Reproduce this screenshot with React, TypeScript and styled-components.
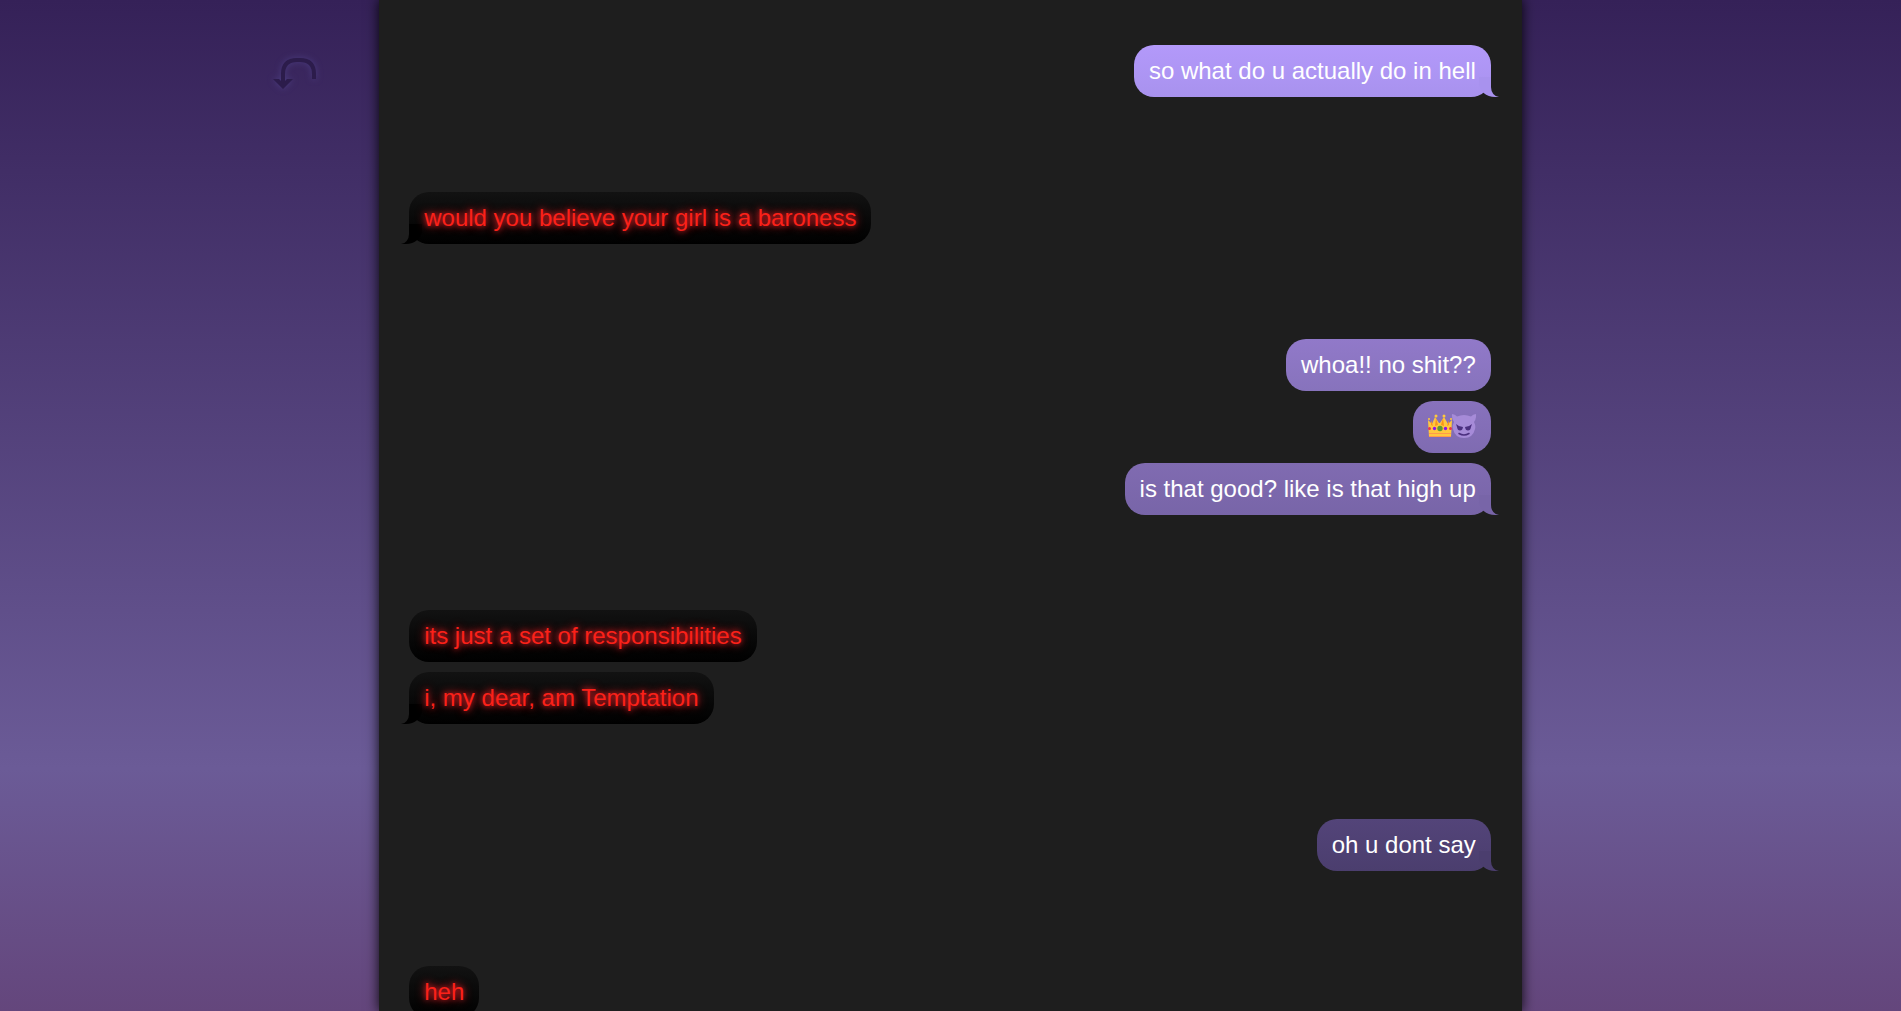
import React from 'react';
import styled, { createGlobalStyle, css } from 'styled-components';

const PANEL = '#1e1e1e';

const GlobalStyle = createGlobalStyle`
  * { box-sizing: border-box; }
  html { height: 100%; }
  body {
    margin: 0;
    height: 100%;
    overflow: hidden;
    font-family: "Liberation Sans", Arial, sans-serif;
  }
  #root { height: 100%; }
`;

const Page = styled.div`
  display: grid;
  grid-template-columns: 1fr 60% 1fr;
  height: 100vh;
  overflow: hidden;
  background: linear-gradient(#352158 0%, #6b5b97 76%, #64467c 100%);
`;

const Side = styled.nav`
  display: flex;
  justify-content: flex-end;
  align-items: flex-start;
  padding: 54px 64px;
`;

const BackButton = styled.button`
  display: flex;
  padding: 0;
  border: 0;
  background: none;
  cursor: pointer;
  color: #2c1c4b;
  filter: drop-shadow(0 0 3px #4b3d80);
`;

const Panel = styled.main`
  height: 100vh;
  padding: 45px 30px 45px 29px;
  overflow: hidden;
  background: ${PANEL};
  box-shadow: 0 0 0 1px ${PANEL}, 0 0 12px 1px rgba(0, 0, 0, 0.9);
`;

const Thread = styled.div`
  display: flex;
  flex-direction: column;
  gap: 95px;
`;

const Group = styled.section<{ $mine: boolean }>`
  display: flex;
  flex-direction: column;
  align-items: ${(p) => (p.$mine ? 'flex-end' : 'flex-start')};
  gap: 10px;
`;

const mineTail = css`
  &::before {
    right: -8px;
    width: 20px;
    height: 20px;
    background: var(--tail);
    border-bottom-left-radius: 16px 14px;
  }
  &::after {
    right: -12px;
    width: 12px;
    height: 20px;
    background: ${PANEL};
    border-bottom-left-radius: 8px 10px;
  }
`;

const theirTail = css`
  &::before {
    left: -8px;
    width: 21px;
    height: 20px;
    background: #000;
    border-bottom-right-radius: 16px 14px;
  }
  &::after {
    left: -12px;
    width: 12px;
    height: 20px;
    background: ${PANEL};
    border-bottom-right-radius: 8px 10px;
  }
`;

const Bubble = styled.p<{ $mine: boolean; $from: string; $to: string; $tail: boolean }>`
  position: relative;
  margin: 0;
  padding: 12px 15px;
  border-radius: 20px;
  font-size: 24px;
  line-height: 28px;
  color: ${(p) => (p.$mine ? '#fff' : '#fb2119')};
  text-shadow: ${(p) => (p.$mine ? 'none' : '0 0 10px #fb2128, 0 0 5px rgba(251, 33, 40, 0.6)')};
  background: linear-gradient(${(p) => p.$from}, ${(p) => p.$to});
  --tail: ${(p) => p.$to};

  &::before,
  &::after {
    position: absolute;
    bottom: 0;
    content: ${(p) => (p.$tail ? '""' : 'none')};
  }
  ${(p) => (p.$mine ? mineTail : theirTail)}
`;

const Label = styled.span`
  position: relative;
  z-index: 1;
`;

const Emoji = styled.svg`
  display: block;
  width: 48px;
  height: 28px;
`;

function Royalty() {
  return (
    <Emoji viewBox="0 0 48 28" role="img" aria-label="crown, smiling imp">
      <path d="M0 7L4 11 7 4 11 10 12 10 16 4 20 11 24 7 23 24H1z" fill="#ffc83d" />
      <path d="M3 7l2 6-2-1zM8 5l2 7-3 1zM15 5l-2 7 3 1zM21 7l-2 6 2-1z" fill="#f7941d" />
      <circle cx="1" cy="6" r="1" fill="#ffc83d" />
      <circle cx="8" cy="3" r="1.500" fill="#ffc83d" />
      <circle cx="16" cy="3" r="1.500" fill="#ffc83d" />
      <circle cx="23" cy="6" r="1" fill="#ffc83d" />
      <path d="M1 20h22v1H1zM1 23h22v1H1z" fill="#ff9a4a" />
      <circle cx="1.500" cy="15.500" r="1.500" fill="#e8344e" />
      <circle cx="6.500" cy="15.500" r="1.700" fill="#8b16e8" />
      <circle cx="12" cy="15.500" r="2.700" fill="#5d9834" />
      <circle cx="17.500" cy="15.500" r="1.700" fill="#8b16e8" />
      <circle cx="22.500" cy="15.500" r="1.500" fill="#e8344e" />
      <path d="M24 1q3 0 5 2.500 7-3 14 0Q45 1 48 1q.5 5-2 8 2 4 1 7-2 9-11 9t-11-9q-1-3 1-7-2.500-3-2-8z" fill="#a68bd8" />
      <path d="M28 11q3 3 7 3-.5 3.500-3 3.500T29 14zM44 11q-3 3-7 3 .5 3.500 3 3.500T43 14z" fill="#4b2f7f" />
      <path d="M31 20.500q5 3 10 0" fill="none" stroke="#4b2f7f" strokeWidth="1.500" strokeLinecap="round" />
    </Emoji>
  );
}

type Message = { body: React.ReactNode; from: string; to: string };
type Turn = { mine: boolean; messages: Message[] };

const dark = (body: string): Message => ({ body, from: '#121212', to: '#000000' });

const turns: Turn[] = [
  { mine: true, messages: [{ body: 'so what do u actually do in hell', from: '#b399fa', to: '#a892ee' }] },
  { mine: false, messages: [dark('would you believe your girl is a baroness')] },
  {
    mine: true,
    messages: [
      { body: 'whoa!! no shit??', from: '#9179c9', to: '#8773bc' },
      { body: <Royalty />, from: '#8872bd', to: '#7f6bb1' },
      { body: 'is that good? like is that high up', from: '#806bb1', to: '#7865a8' },
    ],
  },
  { mine: false, messages: [dark('its just a set of responsibilities'), dark('i, my dear, am Temptation')] },
  { mine: true, messages: [{ body: 'oh u dont say', from: '#534479', to: '#4b3e6e' }] },
  { mine: false, messages: [dark('heh')] },
];

export default function App() {
  return (
    <Page>
      <GlobalStyle />
      <Side>
        <BackButton aria-label="Back">
          <svg width="46" height="36" viewBox="0 0 46 36" fill="none">
            <path d="M13 31V20Q13 6 27 6H30Q44 6 44 20V25" stroke="currentColor" strokeWidth="4" />
            <path d="M3 25l6 0 4 4 4-4 6 0-10 10z" fill="currentColor" />
          </svg>
        </BackButton>
      </Side>
      <Panel>
        <Thread>
          {turns.map((turn, i) => (
            <Group key={i} $mine={turn.mine}>
              {turn.messages.map((m, j) => (
                <Bubble
                  key={j}
                  $mine={turn.mine}
                  $from={m.from}
                  $to={m.to}
                  $tail={j === turn.messages.length - 1 && i < turns.length - 1}
                >
                  <Label>{m.body}</Label>
                </Bubble>
              ))}
            </Group>
          ))}
        </Thread>
      </Panel>
    </Page>
  );
}
